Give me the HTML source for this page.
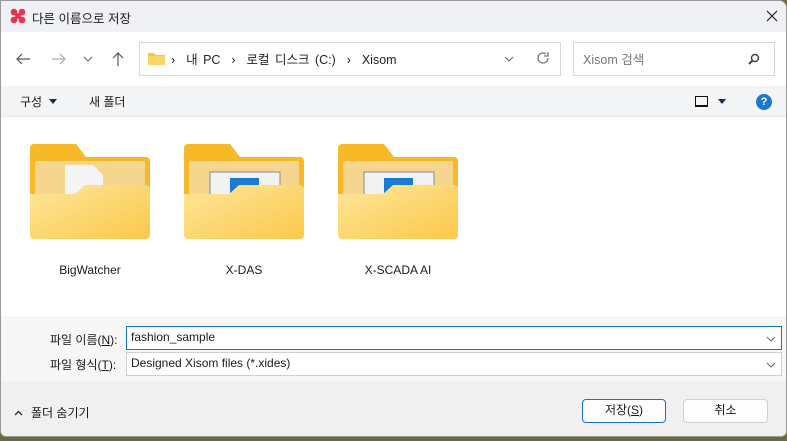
<!DOCTYPE html><html><head><meta charset="utf-8"><style>
*{margin:0;padding:0;box-sizing:border-box}
body{width:787px;height:441px;overflow:hidden;background:#6b6a3a;font-family:"Liberation Sans","Noto Sans CJK KR",sans-serif;font-size:12px;color:#1a1a1a;position:relative}
.win{position:absolute;left:0;top:0;width:787px;height:437px;background:#fff;border:1px solid #9a9a9a;border-radius:0 8px 6px 6px;overflow:hidden}
.title{position:absolute;left:0;top:0;width:100%;height:31px;background:#eff1f4}
.nav{position:absolute;top:31px;left:0;width:100%;height:54px;background:#fff}
.tool{position:absolute;top:85px;left:0;width:100%;height:31px;background:#f3f4f6;border-bottom:1px solid #e5e5e5}
.abs{position:absolute}
.box{position:absolute;border:1px solid #d6d6d6;background:#fff}
.lbl{position:absolute;font-size:12px;width:120px;text-align:center}
.fields{position:absolute;top:315px;left:0;width:100%;height:65px;background:#f7f7f7}
.bottom{position:absolute;top:380px;left:0;width:100%;height:57px;background:#f0f0f0}
.btn{position:absolute;height:24px;border:1px solid #cfcfcf;border-radius:4px;background:#fdfdfd;text-align:center;line-height:21px;font-size:12px}
</style></head><body>
<div class="win">
<div class="title">
<svg class="abs" style="left:9px;top:7px" width="16" height="16" viewBox="0 0 16 16"><g fill="#e8344e"><circle cx="4" cy="4" r="3.3"/><circle cx="12" cy="4" r="3.3"/><circle cx="4" cy="12" r="3.3"/><circle cx="12" cy="12" r="3.3"/><circle cx="8" cy="8" r="3"/></g></svg>
<div class="abs" style="left:31px;top:7px;font-size:12.5px">다른 이름으로 저장</div>
<svg class="abs" style="left:765px;top:9px" width="12" height="12"><path d="M1 1L11 11M11 1L1 11" stroke="#222" stroke-width="1.2"/></svg>
</div>
<div class="nav">
<svg class="abs" style="left:14px;top:20px" width="16" height="14"><path d="M15 7H2M7 2L2 7l5 5" stroke="#555" fill="none" stroke-width="1.2"/></svg>
<svg class="abs" style="left:50px;top:20px" width="16" height="14"><path d="M1 7h13M9 2l5 5-5 5" stroke="#aaa" fill="none" stroke-width="1.2"/></svg>
<svg class="abs" style="left:82px;top:24px" width="10" height="6"><path d="M1 1l4 4 4-4" stroke="#666" fill="none"/></svg>
<svg class="abs" style="left:110px;top:19px" width="14" height="16"><path d="M7 15V2M2 7l5-5 5 5" stroke="#555" fill="none" stroke-width="1.2"/></svg>
<div class="box" style="left:138px;top:10px;width:422px;height:34px"></div>
<svg class="abs" style="left:147px;top:19px" width="17" height="14"><path d="M0 2h6l2 2h9v10H0z" fill="#f6c443"/><path d="M0 5h17v9H0z" fill="#fbd46a"/></svg>
<div class="abs" style="left:170px;top:17px;font-size:12.5px;color:#222;word-spacing:2px">›&nbsp; 내 PC &nbsp;›&nbsp; 로컬 디스크 (C:) &nbsp;›&nbsp; Xisom</div>
<svg class="abs" style="left:503px;top:24px" width="10" height="6"><path d="M1 1l4 4 4-4" stroke="#666" fill="none"/></svg>
<svg class="abs" style="left:535px;top:19px" width="14" height="14"><path d="M12 7a5 5 0 1 1-2-4" stroke="#777" fill="none" stroke-width="1.3"/><path d="M12 1v4H8" stroke="#777" fill="none" stroke-width="1.3"/></svg>
<div class="box" style="left:572px;top:10px;width:202px;height:34px"></div>
<div class="abs" style="left:582px;top:17px;color:#777;font-size:12.5px">Xisom 검색</div>
<svg class="abs" style="left:747px;top:21px" width="12" height="12"><circle cx="7" cy="5" r="3.5" stroke="#444" fill="none" stroke-width="1.5"/><path d="M4.5 7.5L1 11" stroke="#444" stroke-width="2"/></svg>
</div>
<div class="tool">
<div class="abs" style="left:19px;top:7px">구성</div>
<svg class="abs" style="left:48px;top:13px" width="8" height="5"><path d="M0 0h8L4 5z" fill="#1a2a4a"/></svg>
<div class="abs" style="left:88px;top:7px">새 폴더</div>
<div class="abs" style="left:694px;top:10px;width:13px;height:11px;border:1.3px solid #111;border-bottom-width:2px"></div>
<svg class="abs" style="left:717px;top:13px" width="8" height="5"><path d="M0 0h8L4 5z" fill="#1a2a4a"/></svg>
<div class="abs" style="left:755px;top:8px;width:16px;height:16px;border-radius:50%;background:#1a78d0;color:#fff;font-weight:bold;font-size:11px;text-align:center;line-height:16px">?</div>
</div>
<svg class="abs" style="left:29px;top:143px" width="120" height="95" viewBox="0 0 120 95"><defs><linearGradient id="g1" x1="0" y1="0" x2="1" y2="1"><stop offset="0" stop-color="#fde79a"/><stop offset="1" stop-color="#fcc84a"/></linearGradient></defs><path d="M4 0h42l10 13h60a4 4 0 0 1 4 4v70H0V4a4 4 0 0 1 4-4z" fill="#f8b929"/><rect x="5" y="17" width="110" height="50" rx="2" fill="#f6d68e"/><path d="M35 21h28l10 10v36H35z" fill="#f5f5f5"/><path d="M0 50h45l10-9h61a4 4 0 0 1 4 4v46a4 4 0 0 1-4 4H4a4 4 0 0 1-4-4z" fill="url(#g1)"/></svg>
<svg class="abs" style="left:183px;top:143px" width="120" height="95" viewBox="0 0 120 95"><path d="M4 0h42l10 13h60a4 4 0 0 1 4 4v70H0V4a4 4 0 0 1 4-4z" fill="#f8b929"/><rect x="5" y="17" width="110" height="50" rx="2" fill="#f6d68e"/><rect x="26" y="28" width="70" height="40" fill="#f2f2f2" stroke="#888"/><rect x="46" y="34" width="29" height="30" fill="#1a7ad4"/><path d="M0 50h45l10-9h61a4 4 0 0 1 4 4v46a4 4 0 0 1-4 4H4a4 4 0 0 1-4-4z" fill="url(#g1)"/></svg>
<svg class="abs" style="left:337px;top:143px" width="120" height="95" viewBox="0 0 120 95"><path d="M4 0h42l10 13h60a4 4 0 0 1 4 4v70H0V4a4 4 0 0 1 4-4z" fill="#f8b929"/><rect x="5" y="17" width="110" height="50" rx="2" fill="#f6d68e"/><rect x="26" y="28" width="70" height="40" fill="#f2f2f2" stroke="#888"/><rect x="46" y="34" width="29" height="30" fill="#1a7ad4"/><path d="M0 50h45l10-9h61a4 4 0 0 1 4 4v46a4 4 0 0 1-4 4H4a4 4 0 0 1-4-4z" fill="url(#g1)"/></svg>
<div class="lbl" style="left:29px;top:262px">BigWatcher</div>
<div class="lbl" style="left:183px;top:262px">X-DAS</div>
<div class="lbl" style="left:337px;top:262px">X-SCADA AI</div>
<div class="fields">
<div class="abs" style="left:49px;top:15px">파일 이름(<u>N</u>):</div>
<div class="box" style="left:125px;top:10px;width:656px;height:24px;border-color:#1a6fc8"></div>
<div class="abs" style="left:130px;top:14px">fashion_sample</div>
<svg class="abs" style="left:765px;top:20px" width="10" height="6"><path d="M1 1l4 4 4-4" stroke="#666" fill="none"/></svg>
<div class="abs" style="left:49px;top:40px">파일 형식(<u>T</u>):</div>
<div class="box" style="left:125px;top:36px;width:656px;height:24px;border-color:#d0d0d0"></div>
<div class="abs" style="left:130px;top:40px">Designed Xisom files (*.xides)</div>
<svg class="abs" style="left:765px;top:46px" width="10" height="6"><path d="M1 1l4 4 4-4" stroke="#666" fill="none"/></svg>
</div>
<div class="bottom">
<svg class="abs" style="left:13px;top:29px" width="9" height="6"><path d="M1 5l3.5-3.5L8 5" stroke="#333" fill="none" stroke-width="1.4"/></svg>
<div class="abs" style="left:30px;top:23px">폴더 숨기기</div>
<div class="btn" style="left:581px;top:18px;width:84px;border-color:#1a6fc8">저장(<u>S</u>)</div>
<div class="btn" style="left:682px;top:18px;width:85px">취소</div>
</div>
</div>
</body></html>
